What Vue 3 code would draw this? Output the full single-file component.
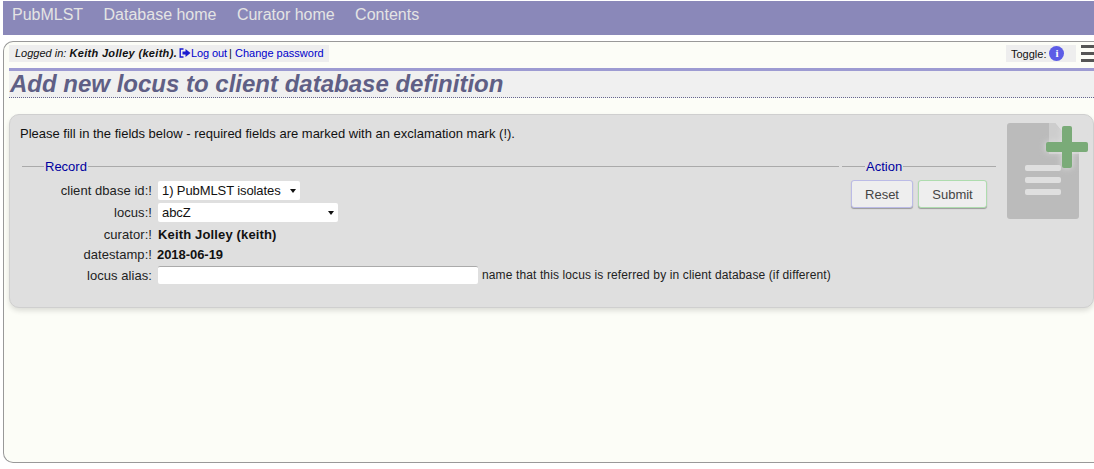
<template>
  <nav class="topnav">
    <a v-for="link in navLinks" :key="link" class="nav-link">{{ link }}</a>
  </nav>

  <main class="content">
    <div class="status-row">
      <div class="login-box">
        <em>Logged in: <b>Keith Jolley (keith).</b></em>
        <svg class="logout-icon" viewBox="0 0 12 10" width="12" height="10">
          <path d="M4.5 1H1.2v8h3.3" fill="none" stroke="#1a1ad0" stroke-width="1.4" />
          <path d="M3.5 3.5h3V1l5 4-5 4V6.5h-3z" fill="#1a1ad0" />
        </svg><a class="logout">Log out</a> | <a>Change password</a>
      </div>
      <div class="toggles">
        <div class="toggle-box">
          Toggle:
          <span class="info-dot">i</span>
        </div>
        <div class="burger"><i></i><i></i><i></i></div>
      </div>
    </div>

    <h1 class="page-title">Add new locus to client database definition</h1>

    <section class="panel">
      <p class="intro">Please fill in the fields below - required fields are marked with an exclamation mark (!).</p>

      <div class="form-cols">
        <fieldset class="record">
          <legend>Record</legend>
          <div class="row">
            <label>client dbase id:!</label>
            <span class="select-wrap">
              <select class="select-db"><option>1) PubMLST isolates</option></select>
            </span>
          </div>
          <div class="row">
            <label>locus:!</label>
            <span class="select-wrap">
              <select class="select-locus"><option>abcZ</option></select>
            </span>
          </div>
          <div class="row">
            <label>curator:!</label>
            <b class="curator">Keith Jolley (keith)</b>
          </div>
          <div class="row row-date">
            <label>datestamp:!</label>
            <b class="date">2018-06-19</b>
          </div>
          <div class="row row-alias">
            <label>locus alias:</label>
            <input class="alias" type="text" />
            <span class="hint">name that this locus is referred by in client database (if different)</span>
          </div>
        </fieldset>

        <fieldset class="action">
          <legend>Action</legend>
          <div class="buttons">
            <button class="btn reset" type="button">Reset</button>
            <button class="btn submit" type="button">Submit</button>
          </div>
        </fieldset>
      </div>

      <svg class="add-icon" viewBox="0 0 86 100" width="86" height="100">
        <defs>
          <filter id="glow" x="-30%" y="-30%" width="160%" height="160%">
            <feGaussianBlur stdDeviation="3" />
          </filter>
        </defs>
        <path d="M3 0h45l24 29v64a3 3 0 0 1-3 3H3a3 3 0 0 1-3-3V3a3 3 0 0 1 3-3z" fill="#bbbbbb" />
        <path d="M42 0h6l24 29v2H42z" fill="#cdcdcd" />
        <rect x="18" y="42" width="36" height="6" rx="2" fill="#dfdfdf" />
        <rect x="18" y="54" width="36" height="6" rx="2" fill="#dfdfdf" />
        <rect x="18" y="66" width="36" height="6" rx="2" fill="#dfdfdf" />
        <path d="M55 3h10v16h16v10H65v16H55V29H39V19h16z" fill="#dfdfdf" filter="url(#glow)" />
        <rect x="55" y="3" width="10" height="42" rx="2" fill="#7aab78" />
        <rect x="39" y="19" width="42" height="10" rx="2" fill="#7aab78" />
      </svg>
    </section>
  </main>
</template>

<script setup>
const navLinks = ['PubMLST', 'Database home', 'Curator home', 'Contents']
</script>

<style>
html, body { background: #fff; overflow: hidden; }
</style>

<style scoped>
.topnav {
  display: flex;
  gap: 20.4px;
  height: 34px;
  margin: 1px 0 0 3px;
  padding: 5px 0 0 9px;
  box-sizing: border-box;
  background: #8a88b9;
  font: 16px "Liberation Sans", Arial, sans-serif;
  line-height: 18px;
}
.nav-link { color: #e4e4e4; }

.content {
  box-sizing: border-box;
  height: 422px;
  margin: 6px 0 0 3px;
  padding: 3px 0 0 5px;
  background: #fcfdf7;
  border: 1px solid #999;
  border-right: 0;
  border-radius: 10px 0 0 10px;
  font-family: "Liberation Sans", Arial, sans-serif;
  color: #111;
}

.status-row { display: flex; justify-content: space-between; height: 17px; }
.login-box {
  padding: 0 5px 0 6px;
  background: #eeeeee;
  font-size: 11px;
  line-height: 17px;
}
.login-box b { letter-spacing: 0.32px; }
.login-box a { color: #0000cc; }
.logout { margin-right: -1px; letter-spacing: -0.1px; }
.logout-icon { margin-left: 2px; vertical-align: -1px; }
.toggles { display: flex; gap: 5px; }
.toggle-box {
  display: flex;
  align-items: center;
  gap: 3px;
  width: 70px;
  box-sizing: border-box;
  padding-left: 5px;
  background: #eeeeee;
  font-size: 11px;
}
.info-dot {
  width: 15px;
  height: 15px;
  border-radius: 50%;
  background: #5c5ce6;
  color: #fff;
  font: bold 11px/15px "Liberation Serif", serif;
  text-align: center;
}
.burger {
  display: flex;
  flex-direction: column;
  justify-content: space-between;
  width: 13px;
}
.burger i { display: block; height: 3px; background: #555; }

.page-title {
  margin: 6px 0 0;
  padding-left: 1px;
  height: 26px;
  border-top: 3px solid #9d9bd2;
  border-bottom: 1px dotted #66668f;
  background: #f0f0f0;
  color: #5f5f85;
  font-size: 24px;
  font-style: italic;
  font-weight: bold;
  line-height: 25px;
  white-space: nowrap;
}

.panel {
  position: relative;
  box-sizing: border-box;
  height: 194px;
  margin-top: 16px;
  padding: 11px 10px 0;
  background: #dfdfdf;
  border: 1px solid #cfcfcf;
  border-radius: 10px;
  box-shadow: 0 3px 5px rgba(0, 0, 0, 0.12);
  font-size: 13px;
}
.intro { margin: 0; line-height: 15px; }

.form-cols { display: flex; gap: 3px; margin: 18px 0 0 2px; }
fieldset {
  margin: 0;
  padding: 0;
  border: 0;
  border-top: 1px solid #aaa;
  min-width: 0;
  box-sizing: border-box;
}
legend { color: #0000a0; padding: 0 1px; line-height: 15px; margin-left: 22px; }
.record { width: 817px; }
.action { width: 154px; }
.action legend { margin-left: 23px; }

.record .row:first-of-type { margin-top: 5px; }
.row { display: flex; align-items: center; gap: 6px; height: 22px; color: #222; }
.row-date { height: 18px; }
.row-alias { height: 24px; }
.row label { width: 130px; text-align: right; letter-spacing: 0.06px; white-space: nowrap; }
.row b { color: #111; }
.curator { letter-spacing: 0.15px; }
.date { margin-left: -1px; letter-spacing: -0.05px; }
.hint { margin-left: -2px; font-size: 12px; letter-spacing: 0.12px; white-space: nowrap; }

.select-wrap { position: relative; display: block; height: 19px; }
.select-wrap::after {
  content: "";
  position: absolute;
  top: 8px;
  right: 4px;
  border-left: 3.5px solid transparent;
  border-right: 3.5px solid transparent;
  border-top: 4px solid #111;
  pointer-events: none;
}
select, .alias {
  box-sizing: border-box;
  border: 0;
  border-radius: 2px;
  background: #fff;
  font: 13px "Liberation Sans", Arial, sans-serif;
  color: #111;
  outline: none;
}
select { display: block; height: 19px; padding: 0 0 0 4px; letter-spacing: -0.1px; appearance: none; }
.select-db { width: 142px; }
.select-locus { width: 180px; }
.alias { width: 320px; height: 18px; border-top: 1px solid #aaa; }

.buttons { display: flex; gap: 5px; margin: 6px 0 0 9px; }
.btn {
  height: 28px;
  border-radius: 3px;
  background: #eeeeee;
  color: #444;
  font: 13px "Liberation Sans", Arial, sans-serif;
}
.reset { width: 62px; border: 1px solid #bbbbe6; box-shadow: 0 1px 1px #999; }
.submit { width: 69px; border: 1px solid #aedcae; box-shadow: 0 1px 1px #999; }

.add-icon { position: absolute; top: 8px; right: 0; }
</style>
